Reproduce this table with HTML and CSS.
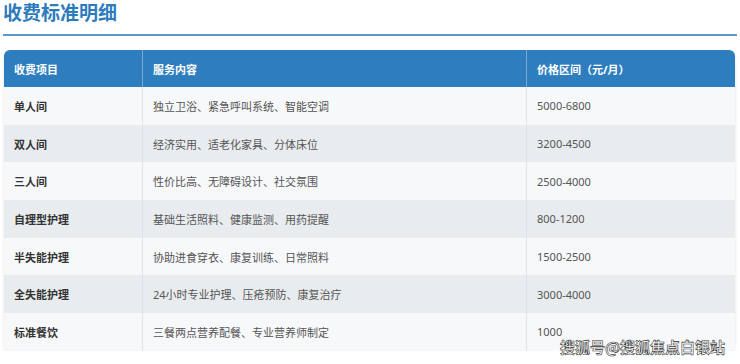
FILE: index.html
```html
<!DOCTYPE html>
<html lang="zh-CN">
<head>
    <meta charset="UTF-8">
    <meta name="viewport" content="width=device-width, initial-scale=1.0">
    <title>收费标准明细</title>
    <link rel="stylesheet" href="styles.css">
</head>
<body>
    <div class="page">
        <h2 class="section-title">收费标准明细</h2>
        <div class="table-wrap">
            <table class="fee-table">
                <thead>
                    <tr>
                        <th class="col-item">收费项目</th>
                        <th class="col-desc">服务内容</th>
                        <th class="col-price">价格区间（元/月）</th>
                    </tr>
                </thead>
                <tbody>
                    <tr><td>单人间</td><td>独立卫浴、紧急呼叫系统、智能空调</td><td>5000-6800</td></tr>
                    <tr><td>双人间</td><td>经济实用、适老化家具、分体床位</td><td>3200-4500</td></tr>
                    <tr><td>三人间</td><td>性价比高、无障碍设计、社交氛围</td><td>2500-4000</td></tr>
                    <tr><td>自理型护理</td><td>基础生活照料、健康监测、用药提醒</td><td>800-1200</td></tr>
                    <tr><td>半失能护理</td><td>协助进食穿衣、康复训练、日常照料</td><td>1500-2500</td></tr>
                    <tr><td>全失能护理</td><td>24小时专业护理、压疮预防、康复治疗</td><td>3000-4000</td></tr>
                    <tr><td>标准餐饮</td><td>三餐两点营养配餐、专业营养师制定</td><td>1000</td></tr>
                </tbody>
            </table>
        </div>
    </div>
    <div class="watermark">搜狐号@搜狐焦点白银站</div>
</body>
</html>
```

FILE: styles.css
```css
body {
    margin: 0;
    padding: 0;
    background-color: #ffffff;
    font-family: "Noto Sans", "Noto Sans CJK SC", sans-serif;
    color: #333333;
}
.page {
    padding: 0 3px;
}
.section-title {
    margin: 0;
    padding: 1px 0 9px;
    font-size: 19px;
    line-height: 24px;
    font-weight: bold;
    color: #2d7bbd;
    border-bottom: 2px solid #5d98cc;
}
.table-wrap {
    margin: 14px 2px 0 1px;
    border-radius: 6px;
    overflow: hidden;
    box-shadow: 0 1px 3px rgba(0, 0, 0, 0.12);
}
.fee-table {
    width: 100%;
    border-collapse: collapse;
    table-layout: fixed;
    font-size: 11px;
}
.fee-table th {
    background-color: #2e7ebf; /* header blue */
    color: #ffffff;
    font-weight: bold;
    text-align: left;
    height: 37px;
    padding: 0 10px;
    border-left: 1px solid #78a9d4;
}
.fee-table th:first-child,
.fee-table td:first-child {
    border-left: none;
}
.col-item { width: 118px; }
.col-desc { width: 363px; }
.fee-table td {
    height: 37.7px;
    padding: 0 10px;
    color: #555555;
    border-left: 1px solid #dfe4ea;
}
.fee-table td:first-child {
    font-weight: bold;
    color: #333333;
}
.fee-table tbody tr:nth-child(odd) {
    background-color: #f7f8fa;
}
.fee-table tbody tr:nth-child(even) {
    background-color: #e9ecef;
}
/* platform watermark over the table corner */
.watermark {
    position: absolute;
    left: 560px;
    top: 337px;
    font-size: 15px;
    line-height: 20px;
    color: #ffffff;
    -webkit-text-stroke: 0.6px #333333;
    font-weight: bold;
    font-family: "Noto Sans CJK SC", sans-serif;
}
```
